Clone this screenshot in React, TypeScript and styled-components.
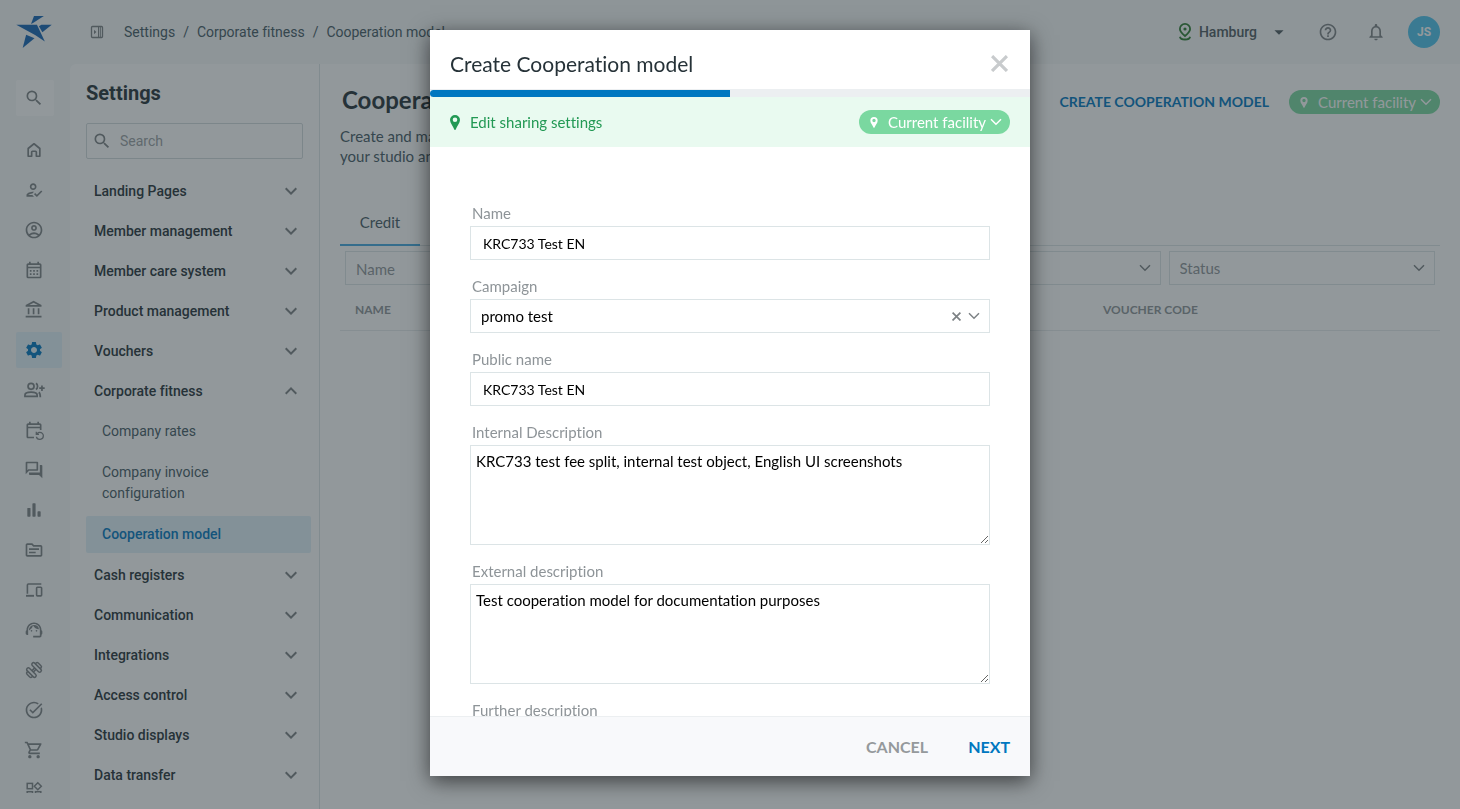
import React, { useState } from "react";
import styled, { createGlobalStyle, css } from "styled-components";
import {
  MdArrowDropDown,
  MdExpandLess,
  MdExpandMore,
  MdOutlineAccountBalance,
  MdOutlineAccountCircle,
  MdOutlineCalendarMonth,
  MdOutlineEventRepeat,
  MdOutlineForum,
  MdOutlineHelpOutline,
  MdOutlineHowToReg,
  MdOutlineNotifications,
  MdOutlineShoppingCart,
  MdOutlineSource,
  MdOutlineSupportAgent,
  MdSearch,
  MdSettings,
  MdTaskAlt,
} from "react-icons/md";

const color = {
  ink: "#263238",
  slate: "#455a64",
  icon: "#7d8285",
  muted: "#8e9498",
  line: "#dce4e6",
  blue: "#0077c0",
  sky: "#45a9e0",
  tint: "#e1f0f9",
  shell: "#f6f8f9",
  green: "#229954",
  mint: "#e9faf0",
  pill: "#7ad8a0",
};

const shellFont = 'Roboto, "Liberation Sans", sans-serif';
const pageFont = 'Lato, "Liberation Sans", sans-serif';

const GlobalStyle = createGlobalStyle`
  *, *::before, *::after { box-sizing: border-box; }
  body { margin: 0; background: ${color.shell}; color: ${color.ink}; font-family: ${pageFont}; font-size: 15px; font-variant-ligatures: none; overflow: hidden; }
  button, input, select, textarea { font: inherit; color: inherit; font-variant-ligatures: none; }
  button { border: 0; padding: 0; background: none; cursor: pointer; }
  h1, h2, p, ul, ol { margin: 0; padding: 0; }
  ul, ol { list-style: none; }
  a { color: inherit; text-decoration: none; }
`;

/* ---------- icons ---------- */

const LogoMark = () => (
  <svg width="36" height="32" viewBox="0 0 36 32.500" fill="#1565b5" aria-hidden="true">
    <path d="M18 0H28L17 7L15 8Z" />
    <path d="M0 9H21L29 26L19.500 19.500Z" />
    <path d="M23 10.500L25.500 9H36L26.500 16.500Z" />
    <path d="M10 19L18.500 22.500L6.500 32.500Z" />
  </svg>
);

const CollapseIcon = () => (
  <svg width="14" height="14" viewBox="0 0 14 14" fill="none" stroke="currentColor" aria-hidden="true">
    <rect x="1.500" y="1.500" width="11" height="11" rx="1" strokeWidth="1.300" />
    <path d="M8.500 1.500V12.500M10.300 1.500V12.500" />
    <path d="M4 4.800L6.400 7L4 9.200Z" fill="currentColor" stroke="none" />
  </svg>
);

const HomeIcon = () => (
  <svg width="20" height="20" viewBox="0 0 24 24" fill="none" stroke="currentColor" strokeWidth="2" strokeLinejoin="round" aria-hidden="true">
    <path d="M5 10.200L12 4.500L19 10.200V19.500H14.800V14.500A1 1 0 0 0 13.800 13.500H10.200A1 1 0 0 0 9.200 14.500V19.500H5Z" />
  </svg>
);

const GroupAddIcon = () => (
  <svg width="21" height="20" viewBox="0.800 0 23 22" fill="none" stroke="currentColor" strokeWidth="1.900" aria-hidden="true">
    <circle cx="8.500" cy="7" r="3.300" />
    <path d="M1.800 18V16.500C1.800 14.500 5 13.300 8.500 13.300S15.200 14.500 15.200 16.500V18Z" />
    <path d="M13.800 3.700C16.300 4.500 16.300 9.500 13.800 10.300M17 13.500C18.300 14.300 18.700 15.300 18.700 18.900M20.500 6V12M17.500 9H23.500" />
  </svg>
);

const BarsIcon = () => (
  <svg width="20" height="20" viewBox="0 0 24 24" fill="currentColor" aria-hidden="true">
    <rect x="4" y="9.500" width="3.800" height="10.500" rx="0.800" />
    <rect x="10.100" y="4" width="3.800" height="16" rx="0.800" />
    <rect x="16.200" y="13.500" width="3.800" height="6.500" rx="0.800" />
  </svg>
);

const DevicesIcon = () => (
  <svg width="20" height="20" viewBox="0 0 20 20" fill="none" stroke="currentColor" strokeWidth="1.600" aria-hidden="true">
    <path d="M17.300 4H4.400A1 1 0 0 0 3.400 5V13.800" />
    <path d="M2 15.800H10" strokeWidth="1.900" />
    <rect x="12.600" y="7.300" width="5" height="8.600" rx="0.800" />
  </svg>
);

const DumbbellIcon = () => (
  <svg width="20" height="20" viewBox="0 0 24 24" fill="none" stroke="currentColor" strokeWidth="1.800" aria-hidden="true">
    <g transform="rotate(-45 12 12)">
      <rect x="5.600" y="4.800" width="4" height="14.400" rx="1.900" />
      <path d="M5.600 7.900H4.300A1.800 1.800 0 0 0 2.500 9.700V14.300A1.800 1.800 0 0 0 4.300 16.100H5.600" />
      <rect x="14.400" y="4.800" width="4" height="14.400" rx="1.900" />
      <path d="M18.400 7.900H19.700A1.800 1.800 0 0 1 21.500 9.700V14.300A1.800 1.800 0 0 1 19.700 16.100H18.400" />
      <path d="M9.600 10.800H14.400M9.600 13.200H14.400" />
    </g>
  </svg>
);

const WidgetsIcon = () => (
  <svg width="20" height="20" viewBox="0 2 20 20" fill="none" stroke="currentColor" strokeWidth="1.500" aria-hidden="true">
    <rect x="3.200" y="5.400" width="5.300" height="5.300" />
    <path d="M13.800 4.700L17.300 8.200L13.800 11.700L10.300 8.200Z" />
    <rect x="3.200" y="13.700" width="5.300" height="5.300" />
    <rect x="11.500" y="13.700" width="5.300" height="5.300" />
  </svg>
);

const SitePinIcon = () => (
  <svg width="14" height="18" viewBox="0 0 14 18" fill="none" stroke="#2e7d32" strokeWidth="1.800" aria-hidden="true">
    <path d="M7 13C3.800 10.400 1.900 8.300 1.900 6A5.100 5.100 0 0 1 12.100 6C12.100 8.300 10.200 10.400 7 13Z" />
    <circle cx="7" cy="6" r="1.600" fill="#2e7d32" stroke="none" />
    <path d="M1.900 13.700C2.300 15.700 4.200 16.500 7 16.500S11.700 15.700 12.100 13.700" />
  </svg>
);

const PinIcon = ({ width, height }: { width: number; height: number }) => (
  <svg width={width} height={height} viewBox="0 0 10 15" fill="currentColor" fillRule="evenodd" aria-hidden="true">
    <path d="M5 0A5 5 0 0 1 10 5C10 8 7 11 5.700 14.400Q5 15.500 4.300 14.400C3 11 0 8 0 5A5 5 0 0 1 5 0ZM5 2.500A2.300 2.300 0 1 0 5 7.100A2.300 2.300 0 1 0 5 2.500Z" />
  </svg>
);

const ThinChevron = () => (
  <svg width="12" height="8" viewBox="0 0 12 8" fill="none" stroke="currentColor" strokeWidth="1.500" aria-hidden="true">
    <path d="M1 1.200L6 6.200L11 1.200" />
  </svg>
);

const CrossIcon = ({ size, weight }: { size: number; weight: number }) => (
  <svg width={size} height={size} viewBox="0 0 16 16" stroke="currentColor" strokeWidth={weight} aria-hidden="true">
    <path d="M1 1L15 15M15 1L1 15" />
  </svg>
);

/* ---------- shell ---------- */

const Shell = styled.div`
  display: flex;
  flex-direction: column;
  height: 100vh;
`;

const TopBar = styled.header`
  display: flex;
  align-items: center;
  flex: none;
  height: 64px;
  padding: 0 20px 0 16px;
  font-family: ${shellFont};
`;

const Brand = styled.a`
  display: flex;
  width: 74px;
`;

const IconButton = styled.button`
  display: flex;
  color: ${color.icon};
`;

const Breadcrumbs = styled.ol`
  display: flex;
  flex: 1;
  gap: 8px;
  margin-left: 20px;
  font-size: 14px;
  line-height: 20px;
  color: ${color.slate};
`;

const TopActions = styled.div`
  display: flex;
  align-items: center;

  ${IconButton} {
    justify-content: center;
    width: 48px;
  }
`;

const SiteButton = styled.button`
  display: flex;
  align-items: center;
  gap: 7px;
  margin-right: 14px;
  font-size: 14px;
  font-weight: 500;
  color: #4f5b61;

  svg:last-child {
    margin-left: 4px;
  }
`;

const Avatar = styled.button`
  width: 32px;
  height: 32px;
  margin-left: 8px;
  border-radius: 50%;
  background: #4fc3ec;
  color: #fff;
  font-size: 12px;
  font-weight: 700;
`;

const Columns = styled.div`
  display: flex;
  flex: 1;
  min-height: 0;
`;

const Rail = styled.nav`
  flex: none;
  display: flex;
  flex-direction: column;
  gap: 16px;
  width: 70px;
  padding: 16px 8px 16px 16px;
`;

const RailList = styled.ul`
  flex: 1;
  display: flex;
  flex-direction: column;
  gap: 4px;
  min-height: 0;
  overflow: hidden;
`;

const RailButton = styled.button<{ $active?: boolean; $raised?: boolean }>`
  display: flex;
  align-items: center;
  flex: none;
  width: 46px;
  height: 36px;
  padding-left: 8px;
  border-radius: 2px;
  color: ${(p) => (p.$active ? color.blue : color.icon)};
  background: ${(p) => (p.$active ? color.tint : "none")};
  ${(p) =>
    p.$raised &&
    css`
      width: 38px;
      background: #fff;
    `}
`;

const Surface = styled.div`
  display: flex;
  flex: 1;
  min-width: 0;
  background: #fff;
  border-top-left-radius: 6px;
`;

/* ---------- settings menu ---------- */

const SettingsMenu = styled.aside`
  flex: none;
  width: 250px;
  padding: 16px 8px 0 16px;
  overflow: hidden;
  border-right: 1px solid ${color.line};
  font-family: ${shellFont};
`;

const MenuTitle = styled.h2`
  font-size: 20px;
  line-height: 27px;
  font-weight: 700;
`;

const MenuSearch = styled.label`
  display: flex;
  align-items: center;
  gap: 8px;
  height: 36px;
  margin: 16px 8px 12px 0;
  padding: 0 5px;
  border: 1px solid #d3dadc;
  border-radius: 2px;
  color: ${color.icon};

  input {
    flex: 1;
    min-width: 0;
    padding: 0;
    border: 0;
    outline: 0;
    background: none;
    font-size: 14px;
  }

  input::placeholder {
    color: #9aa0a3;
  }
`;

const MenuGroup = styled.button`
  display: flex;
  align-items: center;
  justify-content: space-between;
  width: 100%;
  height: 40px;
  padding: 0 8px;
  font-size: 14px;
  font-weight: 500;

  svg {
    color: ${color.icon};
  }
`;

const SubMenu = styled.ul`
  display: flex;
  flex-direction: column;
  gap: 4px;
  padding: 2px 0;
`;

const SubLink = styled.a<{ $active?: boolean }>`
  display: block;
  padding: 8px 64px 8px 16px;
  border-radius: 2px;
  font-size: 14px;
  line-height: 21px;
  color: ${(p) => (p.$active ? color.blue : color.slate)};
  font-weight: ${(p) => (p.$active ? 500 : 400)};
  background: ${(p) => (p.$active ? color.tint : "none")};
`;

/* ---------- main page ---------- */

const Page = styled.main`
  flex: 1;
  min-width: 0;
  padding: 20px 20px 0;
`;

const PageHead = styled.div`
  display: flex;
  align-items: center;
  gap: 20px;

  h1 {
    flex: 1;
    padding: 0 0 4px 2px;
    font-size: 24px;
    line-height: 32px;
    font-weight: 700;
    white-space: nowrap;
  }
`;

const TextButton = styled.button<{ $tone: string; $small?: boolean }>`
  font-size: ${(p) => (p.$small ? 14 : 16)}px;
  font-weight: 700;
  line-height: 24px;
  color: ${(p) => p.$tone};
`;

const FacilityPill = styled.button`
  display: flex;
  align-items: center;
  height: 24px;
  padding: 0 8px 0 11px;
  border-radius: 12px;
  background: ${color.pill};
  color: #fff;
  font-size: 15px;
  white-space: nowrap;

  span {
    padding: 0 4px 0 10px;
  }
`;

const Intro = styled.p`
  padding-top: 6px;
  line-height: 20px;
  color: ${color.slate};
`;

const Tabs = styled.div`
  display: flex;
  height: 48px;
  margin: 32px 0 5px;
  border-bottom: 1px solid ${color.line};
`;

const Tab = styled.button`
  width: 80px;
  height: 48px;
  padding-top: 2px;
  border-bottom: 2px solid ${color.sky};
  color: ${color.slate};
`;

const Filters = styled.div`
  display: grid;
  grid-template-columns: repeat(4, 1fr);
  gap: 8px;
  padding: 0 5px;
`;

const fieldBox = css`
  width: 100%;
  height: 34px;
  border: 1px solid ${color.line};
  border-radius: 0;
  outline: 0;
  background: #fff;
`;

const FilterInput = styled.input`
  ${fieldBox}
  padding: 2px 10px 0;

  &::placeholder {
    color: ${color.muted};
  }
`;

const SelectWrap = styled.div`
  display: grid;
  align-items: center;

  > * {
    grid-area: 1 / 1;
  }
`;

const SelectBox = styled.select`
  ${fieldBox}
  appearance: none;
  padding: 0 48px 0 10px;
`;

const FilterSelect = styled(SelectBox)`
  color: ${color.muted};
`;

const SelectTools = styled.div`
  display: flex;
  align-items: center;
  gap: 7px;
  justify-self: end;
  padding-right: 10px;
  color: ${color.icon};
  pointer-events: none;

  button {
    display: flex;
    color: inherit;
    pointer-events: auto;
  }
`;

const Table = styled.table`
  width: 100%;
  margin-top: 5px;
  border-collapse: collapse;
  table-layout: fixed;

  th {
    height: 40px;
    padding: 0 15px;
    border-bottom: 1px solid #e6ebed;
    text-align: left;
    font-size: 12px;
    font-weight: 700;
    color: ${color.muted};
  }

  th:first-child {
    width: 34%;
  }

  th:last-child {
    width: 32%;
  }
`;

/* ---------- dialog ---------- */

const Backdrop = styled.div`
  position: fixed;
  inset: 0;
  display: flex;
  justify-content: center;
  padding: 30px 20px 33px;
  background: rgba(38, 50, 56, 0.5);
`;

const Dialog = styled.form`
  display: flex;
  flex-direction: column;
  width: 100%;
  max-width: 600px;
  background: #fff;
  box-shadow: 0 5px 20px rgba(0, 0, 0, 0.6);
`;

const DialogHead = styled.div`
  display: flex;
  align-items: center;
  justify-content: space-between;
  flex: none;
  height: 59px;
  padding: 8px 22px 0 20px;

  h2 {
    font-size: 21px;
    line-height: 28px;
    font-weight: 400;
  }

  button {
    display: flex;
    color: #c8cbcd;
  }
`;

const Progress = styled.div`
  flex: none;
  height: 8px;
  padding-top: 1px;
  background: #eceff1;

  div {
    width: 50%;
    height: 7px;
    border-radius: 4px 0 0 4px;
    background: ${color.blue};
  }
`;

const SharingBar = styled.div`
  display: flex;
  align-items: center;
  justify-content: space-between;
  flex: none;
  height: 50px;
  padding: 0 20px;
  background: ${color.mint};
`;

const SharingLink = styled.a`
  display: flex;
  align-items: center;
  gap: 10px;
  color: ${color.green};
`;

const DialogBody = styled.div`
  display: flex;
  flex-direction: column;
  gap: 16px;
  flex: 1;
  min-height: 0;
  overflow: hidden;
  padding: 56px 40px 0;
  color: #000;
`;

const Field = styled.div`
  flex: none;

  > label {
    display: block;
    margin-bottom: 3px;
    padding-left: 2px;
    line-height: 20px;
    color: ${color.muted};
  }
`;

const TextInput = styled.input`
  ${fieldBox}
  display: block;
  padding: 0 12px;
  font-size: 14px;
`;

const TextArea = styled.textarea`
  ${fieldBox}
  display: block;
  height: 100px;
  padding: 5px;
  line-height: 20px;
  resize: vertical;
`;

const DialogFoot = styled.div`
  display: flex;
  align-items: center;
  justify-content: flex-end;
  flex: none;
  gap: 40px;
  height: 60px;
  padding: 0 20px;
  border-top: 1px solid #eceff1;
  background: #f8f9fb;
`;

const railItems: { label: string; icon: React.ReactNode; active?: boolean }[] = [
  { label: "Home", icon: <HomeIcon /> },
  { label: "Check-in", icon: <MdOutlineHowToReg size={20} /> },
  { label: "Members", icon: <MdOutlineAccountCircle size={20} /> },
  { label: "Calendar", icon: <MdOutlineCalendarMonth size={20} /> },
  { label: "Finances", icon: <MdOutlineAccountBalance size={20} /> },
  { label: "Settings", icon: <MdSettings size={20} />, active: true },
  { label: "Leads", icon: <GroupAddIcon /> },
  { label: "Bookings", icon: <MdOutlineEventRepeat size={20} /> },
  { label: "Messages", icon: <MdOutlineForum size={20} /> },
  { label: "Reports", icon: <BarsIcon /> },
  { label: "Documents", icon: <MdOutlineSource size={20} /> },
  { label: "Devices", icon: <DevicesIcon /> },
  { label: "Support", icon: <MdOutlineSupportAgent size={20} /> },
  { label: "Training", icon: <DumbbellIcon /> },
  { label: "Tasks", icon: <MdTaskAlt size={20} /> },
  { label: "Shop", icon: <MdOutlineShoppingCart size={20} /> },
  { label: "Apps", icon: <WidgetsIcon /> },
];

const menuGroups: { label: string; children?: string[] }[] = [
  { label: "Landing Pages" },
  { label: "Member management" },
  { label: "Member care system" },
  { label: "Product management" },
  { label: "Vouchers" },
  {
    label: "Corporate fitness",
    children: ["Company rates", "Company invoice configuration", "Cooperation model"],
  },
  { label: "Cash registers" },
  { label: "Communication" },
  { label: "Integrations" },
  { label: "Access control" },
  { label: "Studio displays" },
  { label: "Data transfer" },
];

const Facility = () => (
  <FacilityPill type="button">
    <PinIcon width={8} height={11} />
    <span>Current facility</span>
    <ThinChevron />
  </FacilityPill>
);

export default function App() {
  const [name, setName] = useState("KRC733 Test EN");
  const [publicName, setPublicName] = useState("KRC733 Test EN");
  const [campaign, setCampaign] = useState("promo test");

  return (
    <>
      <GlobalStyle />
      <Shell>
        <TopBar>
          <Brand href="#" aria-label="Start page">
            <LogoMark />
          </Brand>
          <IconButton aria-label="Toggle menu">
            <CollapseIcon />
          </IconButton>
          <Breadcrumbs>
            <li><a href="#">Settings</a></li>
            <li aria-hidden="true">/</li>
            <li><a href="#">Corporate fitness</a></li>
            <li aria-hidden="true">/</li>
            <li>Cooperation model</li>
          </Breadcrumbs>
          <TopActions>
            <SiteButton>
              <SitePinIcon />
              Hamburg
              <MdArrowDropDown size={22} />
            </SiteButton>
            <IconButton aria-label="Help"><MdOutlineHelpOutline size={20} /></IconButton>
            <IconButton aria-label="Notifications"><MdOutlineNotifications size={20} /></IconButton>
            <Avatar>JS</Avatar>
          </TopActions>
        </TopBar>

        <Columns>
          <Rail aria-label="Areas">
            <RailButton $raised aria-label="Search"><MdSearch size={20} /></RailButton>
            <RailList>
              {railItems.map((item) => (
                <li key={item.label}>
                  <RailButton $active={item.active} aria-label={item.label}>{item.icon}</RailButton>
                </li>
              ))}
            </RailList>
          </Rail>

          <Surface>
            <SettingsMenu>
              <MenuTitle>Settings</MenuTitle>
              <MenuSearch>
                <MdSearch size={20} />
                <input type="search" placeholder="Search" aria-label="Search settings" />
              </MenuSearch>
              {menuGroups.map((group) => (
                <div key={group.label}>
                  <MenuGroup aria-expanded={Boolean(group.children)}>
                    {group.label}
                    {group.children ? <MdExpandLess size={24} /> : <MdExpandMore size={24} />}
                  </MenuGroup>
                  {group.children && (
                    <SubMenu>
                      {group.children.map((child) => (
                        <li key={child}>
                          <SubLink href="#" $active={child === "Cooperation model"}>{child}</SubLink>
                        </li>
                      ))}
                    </SubMenu>
                  )}
                </div>
              ))}
            </SettingsMenu>

            <Page>
              <PageHead>
                <h1>Cooperation model</h1>
                <TextButton $small $tone={color.blue}>CREATE COOPERATION MODEL</TextButton>
                <Facility />
              </PageHead>
              <Intro>
                Create and manage cooperation
                <br />
                your studio and partners
              </Intro>
              <Tabs role="tablist">
                <Tab role="tab" aria-selected="true">Credit</Tab>
              </Tabs>
              <Filters>
                <FilterInput placeholder="Name" aria-label="Filter by name" />
                <FilterInput aria-label="Filter by public name" />
                <SelectWrap>
                  <FilterSelect aria-label="Filter by campaign"><option></option></FilterSelect>
                  <SelectTools><ThinChevron /></SelectTools>
                </SelectWrap>
                <SelectWrap>
                  <FilterSelect aria-label="Filter by status"><option>Status</option></FilterSelect>
                  <SelectTools><ThinChevron /></SelectTools>
                </SelectWrap>
              </Filters>
              <Table>
                <thead>
                  <tr>
                    <th scope="col">NAME</th>
                    <th scope="col">CAMPAIGN</th>
                    <th scope="col">VOUCHER CODE</th>
                  </tr>
                </thead>
              </Table>
            </Page>
          </Surface>
        </Columns>
      </Shell>

      <Backdrop>
        <Dialog role="dialog" aria-modal="true" aria-labelledby="dialog-title" onSubmit={(e) => e.preventDefault()}>
          <DialogHead>
            <h2 id="dialog-title">Create Cooperation model</h2>
            <button type="button" aria-label="Close"><CrossIcon size={17} weight={3} /></button>
          </DialogHead>
          <Progress role="progressbar" aria-valuenow={50} aria-label="Progress"><div /></Progress>
          <SharingBar>
            <SharingLink href="#">
              <PinIcon width={10} height={15} />
              Edit sharing settings
            </SharingLink>
            <Facility />
          </SharingBar>
          <DialogBody>
            <Field>
              <label htmlFor="name">Name</label>
              <TextInput id="name" value={name} onChange={(e) => setName(e.target.value)} />
            </Field>
            <Field>
              <label htmlFor="campaign">Campaign</label>
              <SelectWrap>
                <SelectBox id="campaign" value={campaign} onChange={(e) => setCampaign(e.target.value)}>
                  <option value=""></option>
                  <option value="promo test">promo test</option>
                </SelectBox>
                <SelectTools>
                  <button type="button" aria-label="Clear campaign" onClick={() => setCampaign("")}>
                    <CrossIcon size={9} weight={3} />
                  </button>
                  <ThinChevron />
                </SelectTools>
              </SelectWrap>
            </Field>
            <Field>
              <label htmlFor="public-name">Public name</label>
              <TextInput id="public-name" value={publicName} onChange={(e) => setPublicName(e.target.value)} />
            </Field>
            <Field>
              <label htmlFor="internal">Internal Description</label>
              <TextArea id="internal" defaultValue="KRC733 test fee split, internal test object, English UI screenshots" />
            </Field>
            <Field>
              <label htmlFor="external">External description</label>
              <TextArea id="external" defaultValue="Test cooperation model for documentation purposes" />
            </Field>
            <Field>
              <label htmlFor="further">Further description</label>
              <TextArea id="further" />
            </Field>
          </DialogBody>
          <DialogFoot>
            <TextButton type="button" $tone="#95999c">CANCEL</TextButton>
            <TextButton type="submit" $tone={color.blue}>NEXT</TextButton>
          </DialogFoot>
        </Dialog>
      </Backdrop>
    </>
  );
}
